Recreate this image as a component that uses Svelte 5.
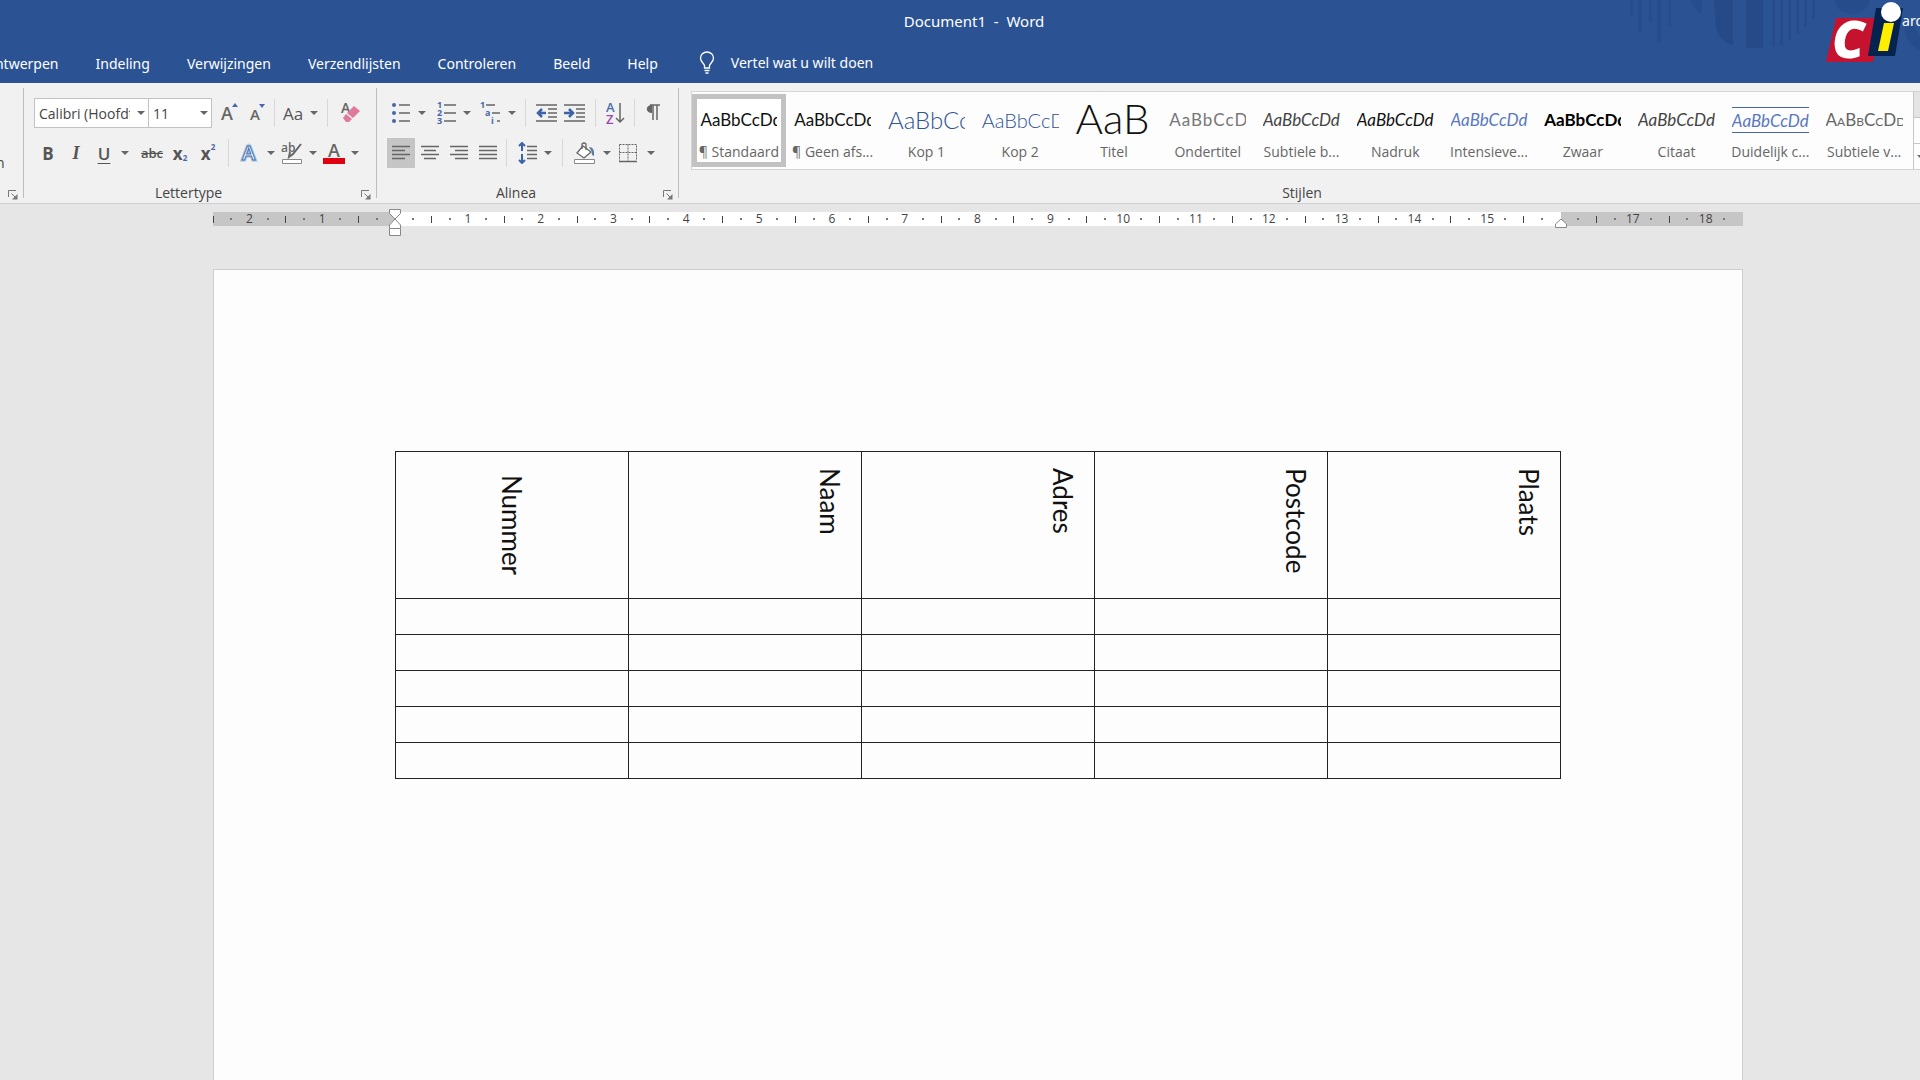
<script>
	const tabs = [
		'Ontwerpen',
		'Indeling',
		'Verwijzingen',
		'Verzendlijsten',
		'Controleren',
		'Beeld',
		'Help'
	];

	const styles = [
		{ name: '¶ Standaard', look: 'normal' },
		{ name: '¶ Geen afs...', look: 'normal' },
		{ name: 'Kop 1', look: 'heading1' },
		{ name: 'Kop 2', look: 'heading2' },
		{ name: 'Titel', look: 'title' },
		{ name: 'Ondertitel', look: 'subtitle' },
		{ name: 'Subtiele b...', look: 'subtle' },
		{ name: 'Nadruk', look: 'emphasis' },
		{ name: 'Intensieve...', look: 'intense' },
		{ name: 'Zwaar', look: 'strong' },
		{ name: 'Citaat', look: 'subtle' },
		{ name: 'Duidelijk c...', look: 'quote' },
		{ name: 'Subtiele v...', look: 'reference' }
	];

	const columns = ['Nummer', 'Naam', 'Adres', 'Postcode', 'Plaats'];
	const emptyRows = [1, 2, 3, 4, 5];

	// 21 cm of ruler, one mark every quarter, text starts at 2.5 cm
	const marks = Array.from({ length: 85 }, (_, i) => {
		const quarter = i - 10;
		if (quarter === 0 || quarter === 64 || i === 84) return { type: 'none' };
		if (quarter % 4 === 0) return { type: 'number', value: Math.abs(quarter / 4) };
		if (quarter % 2 === 0) return { type: 'tick' };
		return { type: 'dot' };
	});

	let selectedStyle = $state(0);
	let align = $state('left');
</script>

{#snippet arrow(label)}
	<button class="arrow" aria-label={label}>
		<svg width="8" height="4" viewBox="0 0 8 4"><path d="M0 0h8L4 4z" fill="#666" /></svg>
	</button>
{/snippet}

{#snippet launcher(label)}
	<button class="launcher" aria-label={label}>
		<svg width="10" height="10" viewBox="0 0 10 10" fill="none" stroke="#777">
			<path d="M.5 7V.5H8M3.500 3.500L8 8" />
			<path d="M9.500 4v5.500H4z" fill="#777" stroke="none" />
		</svg>
	</button>
{/snippet}

<div class="app">
	<header>
		<svg class="pattern" width="300" height="60" viewBox="0 0 300 60" fill="#264a87">
			<path d="M10 0h3v16h-3zM18 0h4v32h-4zM29 0h3v22h-3zM37 0h4v43h-4zM48 0h3v26h-3z" opacity=".6" />
			<path d="M70 0h12v14l-5-3z" opacity=".6" />
			<path d="M94 0h19v45c-9-2-14-8-17-17zM126 0h17v48h-17z" />
			<path d="M152 0h3v47h-3zM160 0h3v45h-3zM168 0h3v40h-3zM176 0h3v34h-3zM184 0h3v27h-3zM192 0h3v19h-3z" opacity=".7" />
			<path d="M214 0h36c-2 9-9 14-18 14s-16-5-18-14z" opacity=".7" />
			<path d="M284 24c0 12 5 21 16 26V36c-4-3-5-7-5-12z" opacity=".7" />
		</svg>
		<h1>Document1&nbsp; -&nbsp; Word</h1>
		<span class="user">ard</span>
		<nav>
			{#each tabs as tab}
				<a href="#{tab}">{tab}</a>
			{/each}
			<a class="tell" href="#vertel">
				<svg width="16" height="24" viewBox="0 0 16 24" fill="none" stroke="#fff" stroke-width="1.300">
					<path d="M5.500 17v-2.500C5 12.500 1.500 11 1.500 7a6.500 6 0 0 1 13 0c0 4-3.500 5.500-4 7.500V17zM5.500 19.500h5M6.500 22h3" />
				</svg>
				Vertel wat u wilt doen
			</a>
		</nav>
		<svg class="logo" width="80" height="64" viewBox="0 0 80 64">
			<path d="M12 18h46l-9 44H2z" fill="#c4122f" />
			<path d="M52 8h27L71 56H44z" fill="#06234f" />
			<path d="M60 23h10l-6 28H54z" fill="#ffee00" />
			<circle cx="67" cy="12" r="10" fill="#fff" />
			<text x="8" y="58" font-family="Open Sans, sans-serif" font-size="52" font-weight="800" font-style="italic" fill="#fff">C</text>
		</svg>
	</header>

	<div class="ribbon">
		<section class="group clipboard">
			<div class="rest">n</div>
			<footer>{@render launcher('Klembord')}</footer>
		</section>

		<section class="group font">
			<div class="row">
				<label class="combo name">
					<input aria-label="Lettertype" value="Calibri (Hoofdtekst)" />
					{@render arrow('Lettertype kiezen')}
				</label>
				<label class="combo size">
					<input aria-label="Tekengrootte" value="11" />
					{@render arrow('Tekengrootte kiezen')}
				</label>
				<button class="tool" aria-label="Lettertype vergroten">
					<svg width="22" height="22" viewBox="0 0 22 22">
						<text x="3" y="18" class="glyph" font-size="18">A</text>
						<path d="M14 5l3-4 3 4z" fill="#4a66a8" />
					</svg>
				</button>
				<button class="tool" aria-label="Lettertype verkleinen">
					<svg width="22" height="22" viewBox="0 0 22 22">
						<text x="4" y="18" class="glyph" font-size="15">A</text>
						<path d="M13 2h6l-3 4z" fill="#4a66a8" />
					</svg>
				</button>
				<i class="sep"></i>
				<button class="tool letters">Aa</button>
				{@render arrow('Hoofdlettergebruik')}
				<i class="sep wide"></i>
				<button class="tool" aria-label="Opmaak wissen">
					<svg width="22" height="22" viewBox="0 0 22 22">
						<text x="3" y="11" class="glyph" font-size="14">A</text>
						<path d="M16 4l6 5-7 7-6-5z" fill="#e07a98" />
						<path d="M8 12l6 5-3 3H8l-3-4z" fill="#e07a98" />
					</svg>
				</button>
			</div>
			<div class="row">
				<button class="tool letters bold">B</button>
				<button class="tool letters italic">I</button>
				<button class="tool letters underline">U</button>
				{@render arrow('Onderstrepingsstijl')}
				<button class="tool letters strike after-arrow">abc</button>
				<button class="tool letters script">x<sub>2</sub></button>
				<button class="tool letters script">x<sup>2</sup></button>
				<i class="sep wide"></i>
				<button class="tool" aria-label="Teksteffecten">
					<svg width="22" height="22" viewBox="0 0 22 22">
						<text x="3" y="18" font-family="Open Sans, sans-serif" font-weight="600" font-size="20" fill="#fff" stroke="#a9c5e6" stroke-width="3">A</text>
						<text x="3" y="18" font-family="Open Sans, sans-serif" font-weight="600" font-size="20" fill="#fff" stroke="#4472ad">A</text>
					</svg>
				</button>
				{@render arrow('Teksteffecten kiezen')}
				<button class="tool" aria-label="Markeringskleur">
					<svg width="22" height="22" viewBox="0 0 22 22">
						<text x="0" y="10" class="glyph" font-size="12">ab</text>
						<path d="M20 2L12 12l-4 3 1-5" fill="none" stroke="#666" stroke-width="2" />
						<path d="M1.500 17.500h19v4h-19z" fill="#fff" stroke="#888" />
					</svg>
				</button>
				{@render arrow('Markeringskleur kiezen')}
				<button class="tool" aria-label="Tekstkleur">
					<svg width="22" height="22" viewBox="0 0 22 22">
						<text x="5" y="15" class="glyph" font-size="18">A</text>
						<path d="M0 16h22v6H0z" fill="#e00010" />
					</svg>
				</button>
				{@render arrow('Tekstkleur kiezen')}
			</div>
			<footer><span>Lettertype</span>{@render launcher('Lettertype-instellingen')}</footer>
		</section>

		<section class="group paragraph">
			<div class="row">
				<button class="tool" aria-label="Opsommingstekens">
					<svg width="22" height="22" viewBox="0 0 22 22">
						<path d="M9 3h11M9 11h11M9 19h11" stroke="#666" stroke-width="1.500" />
						<g fill="#4a66a8"><circle cx="4" cy="3" r="2" /><circle cx="4" cy="11" r="2" /><circle cx="4" cy="19" r="2" /></g>
					</svg>
				</button>
				{@render arrow('Opsommingstekens kiezen')}
				<button class="tool after-list" aria-label="Nummering">
					<svg width="22" height="22" viewBox="0 0 22 22">
						<path d="M9 3h12M9 11h12M9 19h12" stroke="#666" stroke-width="1.500" />
						<g class="digits"><text x="2" y="6">1</text><text x="2" y="14">2</text><text x="2" y="22">3</text></g>
					</svg>
				</button>
				{@render arrow('Nummering kiezen')}
				<button class="tool after-list" aria-label="Lijst met meerdere niveaus">
					<svg width="22" height="22" viewBox="0 0 22 22">
						<path d="M6 3h9M12 11h8M17 19h3" stroke="#666" stroke-width="1.500" />
						<g class="digits"><text x="0" y="6">1</text><text x="5" y="14">a</text><text x="11" y="22">i</text></g>
					</svg>
				</button>
				{@render arrow('Lijst kiezen')}
				<i class="sep wide"></i>
				<button class="tool" aria-label="Inspringing verkleinen">
					<svg width="22" height="22" viewBox="0 0 22 22">
						<path d="M0 3h21M12 7h9M12 11h9M12 15h9M0 19h21" stroke="#666" stroke-width="1.500" />
						<path d="M10 11H3M6 7l-4 4 4 4" fill="none" stroke="#3d62a8" stroke-width="2.500" />
					</svg>
				</button>
				<button class="tool" aria-label="Inspringing vergroten">
					<svg width="22" height="22" viewBox="0 0 22 22">
						<path d="M0 3h21M12 7h9M12 11h9M12 15h9M0 19h21" stroke="#666" stroke-width="1.500" />
						<path d="M0 11h8M5 7l4 4-4 4" fill="none" stroke="#3d62a8" stroke-width="2.500" />
					</svg>
				</button>
				<i class="sep wide"></i>
				<button class="tool" aria-label="Sorteren">
					<svg width="22" height="22" viewBox="0 0 22 22">
						<text x="0" y="10" font-family="Open Sans, sans-serif" font-weight="600" font-size="13" fill="#4a6fa8">A</text>
						<text x="0" y="22" font-family="Open Sans, sans-serif" font-weight="600" font-size="13" fill="#9a45b0">Z</text>
						<path d="M14 1v19M10 16l4 4 4-4" fill="none" stroke="#666" stroke-width="1.500" />
					</svg>
				</button>
				<i class="sep"></i>
				<button class="tool" aria-label="Alles weergeven">
					<svg width="22" height="22" viewBox="0 0 22 22">
						<path d="M10 3C3 3 3 11 10 11z" fill="#666" />
						<path d="M8 3h10M11 3v15M15 3v15" stroke="#666" stroke-width="1.500" />
					</svg>
				</button>
			</div>
			<div class="row spaced">
				<button class="tool" class:on={align === 'left'} onclick={() => (align = 'left')} aria-label="Links uitlijnen">
					<svg width="22" height="22" viewBox="0 0 22 22" class="lines"><path d="M2 4.500h18M2 8.500h13M2 12.500h18M2 16.500h13" /></svg>
				</button>
				<button class="tool" class:on={align === 'center'} onclick={() => (align = 'center')} aria-label="Centreren">
					<svg width="22" height="22" viewBox="0 0 22 22" class="lines"><path d="M2 4.500h18M5 8.500h12M2 12.500h18M5 16.500h12" /></svg>
				</button>
				<button class="tool" class:on={align === 'right'} onclick={() => (align = 'right')} aria-label="Rechts uitlijnen">
					<svg width="22" height="22" viewBox="0 0 22 22" class="lines"><path d="M2 4.500h18M7 8.500h13M2 12.500h18M7 16.500h13" /></svg>
				</button>
				<button class="tool" class:on={align === 'justify'} onclick={() => (align = 'justify')} aria-label="Uitvullen">
					<svg width="22" height="22" viewBox="0 0 22 22" class="lines"><path d="M2 4.500h18M2 8.500h18M2 12.500h18M2 16.500h18" /></svg>
				</button>
				<i class="sep"></i>
				<button class="tool" aria-label="Regelafstand">
					<svg width="22" height="22" viewBox="0 0 22 22">
						<path d="M12 4.500h10M12 8.500h10M12 12.500h10M12 16.500h10" stroke="#666" stroke-width="1.500" />
						<path d="M7 1v8M4 4l3-3 3 3M7 12v9M4 18l3 3 3-3" fill="none" stroke="#3d62a8" stroke-width="2" />
					</svg>
				</button>
				{@render arrow('Regelafstand kiezen')}
				<i class="sep wide"></i>
				<button class="tool" aria-label="Arcering">
					<svg width="22" height="22" viewBox="0 0 22 22">
						<path d="M9 4l8 6-7 6-7-5z" fill="#fff" stroke="#666" stroke-width="1.300" />
						<path d="M8 7V2q2-2 4 0v6" fill="none" stroke="#666" stroke-width="1.300" />
						<path d="M15 5q6 0 5 9-3-1-2-4z" fill="#5a7ba8" />
						<path d="M.5 17.500h20v4H.5z" fill="#fff" stroke="#888" />
					</svg>
				</button>
				{@render arrow('Arcering kiezen')}
				<button class="tool" aria-label="Randen">
					<svg width="22" height="22" viewBox="0 0 22 22">
						<path d="M1.500 2.500h17v16M1.500 2.500v16M10 2.500v16M1.500 10.500h17" fill="none" stroke="#666" stroke-dasharray="2 1" />
						<path d="M1 19.500h18" stroke="#666" stroke-width="1.500" />
					</svg>
				</button>
				{@render arrow('Randen kiezen')}
			</div>
			<footer><span>Alinea</span>{@render launcher('Alinea-instellingen')}</footer>
		</section>

		<section class="group styles">
			<div class="gallery">
				<div class="cards">
					{#each styles as style, i}
						<button class="card" class:selected={selectedStyle === i} onclick={() => (selectedStyle = i)}>
							<span class="preview {style.look}">{style.look === 'title' ? 'AaB' : 'AaBbCcDd'}</span>
							<span class="caption">{style.name}</span>
						</button>
					{/each}
				</div>
				<div class="scroll">
					<button aria-label="Omhoog"></button>
					<button aria-label="Omlaag"></button>
					<button aria-label="Meer">
						<svg width="8" height="4" viewBox="0 0 8 4"><path d="M0 0h8L4 4z" fill="#666" /></svg>
					</button>
				</div>
			</div>
			<footer><span>Stijlen</span></footer>
		</section>
	</div>

	<main>
		<div class="ruler">
			{#each marks as mark}
				<span class="mark {mark.type}">{mark.value ?? ''}</span>
			{/each}
			<svg class="indent left" width="14" height="29" viewBox="0 0 14 29" fill="#fff" stroke="#888">
				<path d="M1.500 1.500h11v4L7 11 1.500 5.500zM7 11l5.500 6v3.500h-11V17zM1.500 20.500h11v7h-11z" />
			</svg>
			<svg class="indent right" width="14" height="11" viewBox="0 0 14 11" fill="#fff" stroke="#888">
				<path d="M7 1l5.500 5v3.500h-11V6z" />
			</svg>
		</div>

		<article class="page">
			<table>
				<thead>
					<tr>
						{#each columns as column, i}
							<th class:middle={i === 0}><span>{column}</span></th>
						{/each}
					</tr>
				</thead>
				<tbody>
					{#each emptyRows as row}
						<tr>
							{#each columns as column}
								<td></td>
							{/each}
						</tr>
					{/each}
				</tbody>
			</table>
		</article>
	</main>
</div>

<style>
	:global(body) {
		margin: 0;
		background: #e6e6e6;
	}

	.app {
		min-height: 100vh;
		display: flex;
		flex-direction: column;
		overflow: hidden;
		font-family: 'Open Sans', 'Noto Sans', sans-serif;
		font-size: 14px;
		color: #444;
	}

	button {
		padding: 0;
		border: 0;
		background: none;
		font: inherit;
		color: inherit;
	}

	svg {
		display: block;
		flex: none;
	}

	/* title bar and tabs */
	header {
		position: relative;
		height: 83px;
		background: #2b5394;
		font-family: 'Noto Sans', sans-serif;
		color: #fff;
		overflow: hidden;
	}

	.pattern {
		position: absolute;
		top: 0;
		right: 0;
	}

	.logo {
		position: absolute;
		top: 0;
		right: 16px;
	}

	h1 {
		margin: 0;
		padding-left: 28px;
		font-size: 15px;
		font-weight: 400;
		line-height: 42px;
		text-align: center;
	}

	.user {
		position: absolute;
		top: 11px;
		right: -4px;
		line-height: 20px;
	}

	nav {
		display: flex;
		gap: 37px;
		height: 41px;
		margin-left: -16px;
		line-height: 44px;
	}

	nav a {
		color: #fff;
		text-decoration: none;
		white-space: nowrap;
	}

	.tell {
		display: flex;
		align-items: center;
		gap: 16px;
		padding-left: 4px;
	}

	/* ribbon */
	.ribbon {
		display: flex;
		height: 115px;
		padding-top: 5px;
		background: #f1f1f1;
		border-bottom: 1px solid #cfcfcf;
	}

	.group {
		display: flex;
		flex-direction: column;
		box-sizing: border-box;
		height: 110px;
		padding-top: 10px;
		border-right: 1px solid #bdbdbd;
	}

	.clipboard {
		width: 24px;
	}

	.rest {
		margin: 56px 0 0 -4px;
		line-height: 18px;
	}

	.font {
		width: 353px;
		padding-left: 10px;
	}

	.paragraph {
		width: 302px;
		padding-left: 10px;
	}

	.styles {
		flex: 1;
		min-width: 0;
		margin-right: -6px;
		padding: 3px 0 0 12px;
	}

	.row {
		display: flex;
		align-items: center;
		height: 30px;
		margin-bottom: 10px;
	}

	.row.spaced {
		gap: 1px;
	}

	.group footer {
		display: flex;
		justify-content: flex-end;
		height: 20px;
		margin-top: auto;
		margin-bottom: -5px;
		line-height: 20px;
	}

	.font footer,
	.paragraph footer {
		margin-left: -10px;
	}

	.styles footer {
		margin-left: -12px;
	}

	.group footer span {
		flex: 1;
		text-align: center;
	}

	.launcher {
		flex: none;
		padding: 3px 5px 0 8px;
	}

	.combo {
		display: flex;
		align-items: center;
		box-sizing: border-box;
		height: 30px;
		border: 1px solid #c2c2c0;
		background: #fff;
	}

	.combo.name {
		width: 115px;
	}

	.combo.size {
		width: 64px;
		margin: 0 3px 0 -1px;
	}

	.combo input {
		flex: 1;
		min-width: 0;
		margin-right: 4px;
		padding: 0 0 0 4px;
		border: 0;
		outline: 0;
		background: none;
		font: inherit;
		color: inherit;
	}

	.tool {
		display: flex;
		align-items: center;
		justify-content: center;
		width: 28px;
		height: 30px;
		flex: none;
	}

	.tool.on {
		background: #c5c5c5;
	}

	.arrow {
		display: flex;
		align-items: center;
		justify-content: center;
		width: 14px;
		height: 30px;
		flex: none;
	}

	.after-arrow {
		margin-left: 6px;
	}

	.after-list {
		margin-left: 3px;
	}

	.sep {
		width: 1px;
		height: 28px;
		margin: 0 4px 0 3px;
		background: #d8d8d8;
	}

	.sep.wide {
		margin: 0 7px 0 6px;
	}

	.letters {
		font-size: 17px;
		color: #555;
	}

	.bold {
		font-weight: 700;
	}

	.italic {
		font-family: 'Liberation Serif', serif;
		font-size: 18px;
		font-style: italic;
		font-weight: 700;
	}

	.underline {
		font-weight: 600;
		text-decoration: underline;
		text-underline-offset: 3px;
	}

	.strike {
		font-size: 13px;
		font-weight: 600;
		text-decoration: line-through;
	}

	.script {
		font-weight: 700;
	}

	.script sub,
	.script sup {
		font-size: 8px;
		line-height: 8px;
		color: #4a66a8;
	}

	.script sub {
		align-self: flex-end;
		margin-bottom: 6px;
	}

	.script sup {
		align-self: flex-start;
		margin-top: 5px;
	}

	.glyph {
		font-family: 'Open Sans', sans-serif;
		font-weight: 600;
		fill: #666;
	}

	.digits {
		font-size: 9px;
		font-weight: 700;
		fill: #4a66a8;
	}

	.lines {
		fill: none;
		stroke: #666;
		stroke-width: 1.5;
	}

	/* style gallery */
	.gallery {
		display: flex;
		box-sizing: border-box;
		height: 79px;
		border: 1px solid #d4d4d4;
		background: #fdfdfd;
	}

	.cards {
		flex: 1;
		display: grid;
		grid-template-columns: repeat(13, 1fr);
		padding: 2px 2px 2px 0;
		min-width: 0;
	}

	.card {
		display: flex;
		flex-direction: column;
		align-items: center;
		box-sizing: border-box;
		min-width: 0;
		height: 73px;
		padding: 9px 0 0;
		overflow: hidden;
	}

	.card.selected {
		padding: 4px 0 0;
		border: 5px solid #c2c2c2;
		background: #fff;
	}

	.preview {
		flex: none;
		width: 77px;
		height: 34px;
		overflow: hidden;
		font-family: Lato, sans-serif;
		font-size: 17px;
		line-height: 34px;
		text-align: left;
		white-space: nowrap;
		color: #111;
	}

	.caption {
		flex: none;
		line-height: 26px;
		margin-top: 2px;
		white-space: nowrap;
		color: #666;
	}

	.heading1,
	.heading2 {
		font-weight: 300;
		color: #2f5496;
	}

	.heading1 {
		font-size: 24px;
	}

	.heading2 {
		font-size: 20px;
	}

	.title {
		font-size: 42px;
		font-weight: 300;
		line-height: 30px;
	}

	.subtitle {
		color: #777;
		letter-spacing: 1px;
	}

	.subtle,
	.emphasis,
	.intense,
	.quote {
		font-style: italic;
	}

	.subtle {
		color: #444;
	}

	.intense,
	.quote {
		color: #5a78c0;
	}

	.quote {
		height: 24px;
		margin: 4px 0;
		border-top: 1px solid #4a66a8;
		border-bottom: 1px solid #4a66a8;
		line-height: 26px;
	}

	.strong {
		font-weight: 700;
		color: #000;
	}

	.reference {
		color: #666;
		font-variant: small-caps;
	}

	.scroll {
		display: flex;
		flex-direction: column;
		width: 10px;
		border-left: 1px solid #c6c6c6;
	}

	.scroll button {
		flex: 1;
		padding-left: 3px;
		border-bottom: 1px solid #c6c6c6;
	}

	.scroll button:last-child {
		border-bottom: 0;
	}

	.scroll button:first-child {
		background: #e4e4e4;
	}

	/* document */
	main {
		flex: 1;
		display: flex;
		flex-direction: column;
		align-items: center;
		padding-left: 36px;
	}

	.ruler {
		position: relative;
		display: flex;
		justify-content: space-between;
		align-items: center;
		width: 100%;
		max-width: 1530px;
		height: 14px;
		margin: 8px 0 43px;
		background: linear-gradient(
			to right,
			#c6c6c6 11.9%,
			#fff 11.9%,
			#fff 88.1%,
			#c6c6c6 88.1%
		);
	}

	.mark {
		display: flex;
		justify-content: center;
		width: 0;
		font-size: 12px;
		line-height: 14px;
		color: #444;
	}

	.tick::before,
	.dot::before {
		content: '';
		flex: none;
		width: 1px;
		height: 7px;
		background: #444;
	}

	.dot::before {
		width: 2px;
		height: 2px;
		background: #777;
	}

	.indent {
		position: absolute;
		transform: translateX(-50%);
	}

	.indent.left {
		top: -4px;
		left: 11.9%;
	}

	.indent.right {
		top: 6px;
		left: 88.1%;
	}

	.page {
		flex: 1;
		box-sizing: border-box;
		width: 100%;
		max-width: 1530px;
		padding: 181px 181px 0;
		border: 1px solid #cdcdcd;
		border-bottom: 0;
		background: #fdfdfd;
	}

	table {
		width: 100%;
		table-layout: fixed;
		border-collapse: collapse;
		color: #111;
	}

	th,
	td {
		box-sizing: border-box;
		padding: 0;
		border: 1px solid #222;
	}

	th {
		height: 147px;
		padding: 16px 16px 0 0;
		font-family: Lato, sans-serif;
		font-size: 26px;
		font-weight: 400;
		line-height: 30px;
		text-align: right;
		vertical-align: top;
	}

	th.middle {
		padding: 0;
		text-align: center;
		vertical-align: middle;
	}

	th span {
		display: inline-block;
		vertical-align: top;
		writing-mode: vertical-rl;
	}

	td {
		height: 36px;
	}
</style>
